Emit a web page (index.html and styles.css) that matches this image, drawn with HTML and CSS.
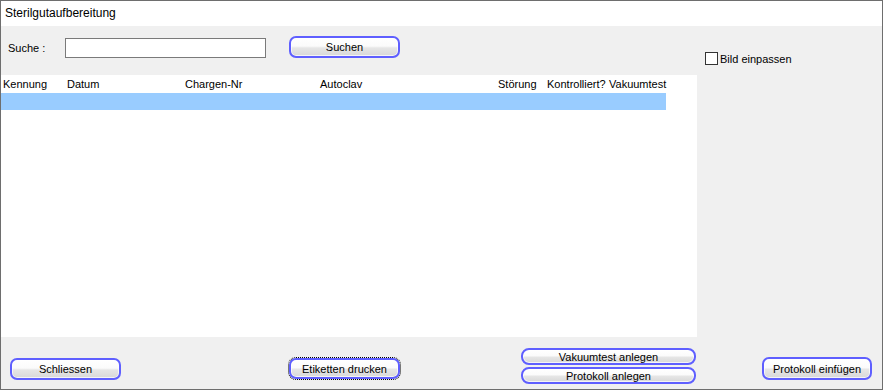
FILE: index.html
```html
<!DOCTYPE html>
<html lang="de">
<head>
    <meta charset="UTF-8">
    <title>Sterilgutaufbereitung</title>
    <link rel="stylesheet" href="styles.css">
</head>
<body>
    <div class="window">
        <div class="titlebar">Sterilgutaufbereitung</div>

        <div class="content">
            <div class="search-row">
                <label class="search-label" for="suche">Suche :</label>
                <input type="text" id="suche" class="search-input">
                <button class="btn btn-search">Suchen</button>
            </div>

            <div class="side-panel">
                <label class="check">
                    <span class="check-box"></span>
                    Bild einpassen
                </label>
            </div>

            <div class="grid">
                <div class="grid-head">
                    <span>Kennung</span>
                    <span>Datum</span>
                    <span>Chargen-Nr</span>
                    <span>Autoclav</span>
                    <span>Störung</span>
                    <span>Kontrolliert?</span>
                    <span>Vakuumtest</span>
                </div>
                <div class="grid-row selected"></div>
            </div>

            <div class="footer">
                <button class="btn btn-close">Schliessen</button>
                <button class="btn btn-print focused">Etiketten drucken</button>
                <div class="btn-stack">
                    <button class="btn btn-small">Vakuumtest anlegen</button>
                    <button class="btn btn-small">Protokoll anlegen</button>
                </div>
            </div>

            <div class="side-footer">
                <button class="btn btn-insert">Protokoll einfügen</button>
            </div>
        </div>
    </div>
</body>
</html>
```

FILE: styles.css
```css
body {
    margin: 0;
    font-family: 'Liberation Sans', Arial, sans-serif;
    font-size: 11px;
    color: #000;
}

.window {
    width: 881px;
    height: 388px;
    border: 1px solid #6e6e6e;
    background-color: #f0f0f0;
    display: flex;
    flex-direction: column;
}

.titlebar {
    height: 25px;
    line-height: 25px;
    padding-left: 4px;
    background-color: #fff;
    font-size: 12px;
}

.content {
    flex: 1;
    display: grid;
    grid-template-columns: 696px 1fr;
    grid-template-rows: 49px 262px 1fr;
}

/* search */
.search-row {
    display: flex;
    align-items: flex-start;
}

.search-label {
    margin: 16px 0 0 7px;
    width: 57px;
}

.search-input {
    margin-top: 12px;
    width: 199px;
    height: 18px;
    padding: 0;
    border: 1px solid #7a7a7a;
    background: #fff;
}

.side-panel {
    grid-row: 1 / 3;
    grid-column: 2;
    padding: 26px 0 0 8px;
}

.check {
    display: flex;
    align-items: center;
    gap: 2px;
}

.check-box {
    width: 11px;
    height: 11px;
    border: 1px solid #333;
    background: #fff;
}

/* grid */
.grid {
    background-color: #fff;
}

.grid-head {
    height: 18px;
    display: grid;
    grid-template-columns: 64px 118px 135px 178px 49px 62px 60px;
    align-items: center;
    padding-left: 2px;
}

.grid-row {
    height: 17px;
    width: 665px;
}

.grid-row.selected {
    background-color: #99ccff;
}

/* buttons */
.btn {
    font-family: inherit;
    font-size: 11px;
    color: #000;
    padding: 0;
    border: 2px solid #5f5fff;
    border-radius: 7px;
    background: linear-gradient(#ffffff 0%, #fbfbfb 45%, #e6e6e6 55%, #d8d8d8 100%);
    box-shadow: inset 0 0 0 1px rgba(255, 255, 255, 0.7);
    cursor: pointer;
}

.btn-search {
    margin: 10px 0 0 23px;
    width: 111px;
    height: 22px;
}

.footer {
    display: flex;
    align-items: flex-start;
}

.btn-close {
    margin: 21px 0 0 9px;
    width: 111px;
    height: 22px;
}

.btn-print {
    margin: 21px 0 0 168px;
    width: 111px;
    height: 21px;
}

.focused {
    outline: 1px dotted #000;
    outline-offset: 0;
}

.btn-stack {
    margin: 11px 0 0 121px;
    display: flex;
    flex-direction: column;
    gap: 2px;
}

.btn-small {
    width: 175px;
    height: 17px;
    border-radius: 8px;
}

.side-footer {
    padding: 20px 0 0 65px;
}

.btn-insert {
    width: 110px;
    height: 23px;
}
```
